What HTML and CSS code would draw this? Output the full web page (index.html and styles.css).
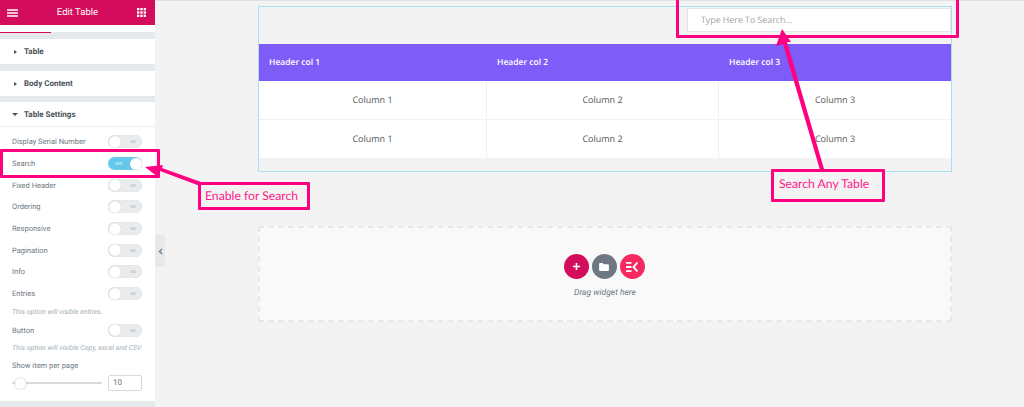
FILE: index.html
```html
<!DOCTYPE html>
<html lang="en">
<head>
  <meta charset="UTF-8" />
  <title>Edit Table</title>
  <link rel="stylesheet" href="styles.css">
</head>
<body>
  <div class="page">
    <aside class="panel">
      <header class="panel-head">
        <svg class="head-icon" width="11" height="8" viewBox="0 0 11 8"><path d="M0 1h11M0 4h11M0 7h11" stroke="#fff" stroke-width="1.4"/></svg>
        <div class="panel-title">Edit Table</div>
        <svg class="head-icon" width="9" height="9" viewBox="0 0 10 10" fill="#fff">
          <rect width="2.6" height="2.6"/><rect x="3.7" width="2.6" height="2.6"/><rect x="7.4" width="2.6" height="2.6"/>
          <rect y="3.7" width="2.6" height="2.6"/><rect x="3.7" y="3.7" width="2.6" height="2.6"/><rect x="7.4" y="3.7" width="2.6" height="2.6"/>
          <rect y="7.4" width="2.6" height="2.6"/><rect x="3.7" y="7.4" width="2.6" height="2.6"/><rect x="7.4" y="7.4" width="2.6" height="2.6"/>
        </svg>
      </header>
      <div class="tabs"><span class="tab-line"></span></div>

      <div class="section"><span class="caret"></span>Table</div>
      <div class="section"><span class="caret"></span>Body Content</div>
      <div class="section open"><span class="caret down"></span>Table Settings</div>

      <div class="settings">
        <div class="row"><span>Display Serial Number</span><span class="toggle">NO</span></div>
        <div class="row"><span>Search</span><span class="toggle on">YES</span></div>
        <div class="row"><span>Fixed Header</span><span class="toggle">NO</span></div>
        <div class="row"><span>Ordering</span><span class="toggle">NO</span></div>
        <div class="row"><span>Responsive</span><span class="toggle">NO</span></div>
        <div class="row"><span>Pagination</span><span class="toggle">NO</span></div>
        <div class="row"><span>Info</span><span class="toggle">NO</span></div>
        <div class="row"><span>Entries</span><span class="toggle">NO</span></div>
        <p class="hint">This option will visible entries.</p>
        <div class="row"><span>Button</span><span class="toggle">NO</span></div>
        <p class="hint">This option will visible Copy, excel and CSV</p>
        <div class="per-page">Show item per page</div>
        <div class="slider-row">
          <div class="slider"><span class="knob"></span></div>
          <div class="num">10</div>
        </div>
      </div>
    </aside>

    <div class="collapse">
      <svg width="5" height="7" viewBox="0 0 5 7"><path d="M4 1 1.5 3.5 4 6" fill="none" stroke="#6d7882" stroke-width="1.3"/></svg>
    </div>

    <main class="canvas">
      <section class="widget">
        <div class="search-wrap">
          <div class="search">Type Here To Search...</div>
        </div>
        <div class="tbl">
          <div class="tbl-row tbl-head"><div>Header col 1</div><div>Header col 2</div><div>Header col 3</div></div>
          <div class="tbl-row"><div>Column 1</div><div>Column 2</div><div>Column 3</div></div>
          <div class="tbl-row"><div>Column 1</div><div>Column 2</div><div>Column 3</div></div>
        </div>
      </section>

      <section class="dropzone">
        <div class="drop-btns">
          <span class="round plus">
            <svg width="9" height="9" viewBox="0 0 10 10"><path d="M5 1v8M1 5h8" stroke="#fff" stroke-width="1.8"/></svg>
          </span>
          <span class="round folder">
            <svg width="10" height="8" viewBox="0 0 11 9"><path d="M0 1a1 1 0 0 1 1-1h3l1 1.300h5a1 1 0 0 1 1 1V8a1 1 0 0 1-1 1H1a1 1 0 0 1-1-1z" fill="#fff"/></svg>
          </span>
          <span class="round ek">
            <svg width="12" height="10" viewBox="0 0 12 10"><path d="M0 0h5.500v1.800H0zM0 4.100h5.500v1.800H0zM0 8.200h5.500V10H0z" fill="#fff"/><path d="M11.500.5 7.500 5l4 4.500" fill="none" stroke="#fff" stroke-width="1.900"/></svg>
          </span>
        </div>
        <div class="drop-text">Drag widget here</div>
      </section>
    </main>

    <!-- pink annotations drawn over the screenshot -->
    <svg class="arrows" width="1024" height="407" viewBox="0 0 1024 407">
      <path d="M145 167 163 165 162 168 201 182 200 186 160 171 158 177z" fill="#ff0080"/>
      <path d="M782 29 791 42 787 42 824 169 820 170 783 44 776 46z" fill="#ff0080"/>
    </svg>
    <div class="mark mark-search"></div>
    <div class="mark mark-toggle"></div>
    <div class="mark mark-enable">Enable for Search</div>
    <div class="mark mark-any">Search Any Table</div>
  </div>
</body>
</html>
```

FILE: styles.css
```css
* {
  margin: 0;
  padding: 0;
  box-sizing: border-box;
}

body {
  background: #f3f3f3;
  font-family: 'Roboto', sans-serif;
  text-rendering: geometricPrecision;
  overflow: hidden;
}

.page {
  position: relative;
  display: flex;
  width: 1024px;
  height: 407px;
  overflow: hidden;
}

/* side panel */
.panel {
  width: 155px;
  height: 407px;
  flex-shrink: 0;
  background: #e6e9ec;
}

.panel-head {
  height: 25px;
  padding: 0 9px 0 7px;
  display: flex;
  align-items: center;
  justify-content: space-between;
  background: #d30c5c;
  color: #fff;
}

.panel-title {
  font-size: 9.500px;
}

.head-icon {
  display: block;
}

.tabs {
  height: 8px;
  background: #fff;
  border-bottom: 1px solid #e6e9ec;
}

.tab-line {
  display: block;
  width: 51px;
  height: 8px;
  border-bottom: 1.500px solid #d30c5c;
}

.section {
  height: 25px;
  margin-top: 6px;
  padding-left: 14px;
  display: flex;
  align-items: center;
  background: #fff;
  color: #495157;
  font-size: 8px;
  font-weight: 700;
}

.section:nth-child(4) {
  margin-top: 7px;
}

.section.open {
  border-bottom: 1px solid #eceeef;
}

.caret {
  width: 0;
  height: 0;
  margin-right: 7px;
  border-left: 3px solid #495157;
  border-top: 2.500px solid transparent;
  border-bottom: 2.500px solid transparent;
}

.caret.down {
  margin-left: -2px;
  margin-right: 6px;
  border-top: 3px solid #495157;
  border-left: 3px solid transparent;
  border-right: 3px solid transparent;
  border-bottom: 0;
}

.settings {
  height: 274px;
  padding: 4px 13px 0 12px;
  background: #fff;
  color: #6d7882;
  font-size: 7.500px;
}

.row {
  height: 21.700px;
  display: flex;
  align-items: center;
  justify-content: space-between;
}

.toggle {
  position: relative;
  width: 34px;
  height: 13px;
  padding-right: 6px;
  border-radius: 7px;
  background: #e9ebed;
  box-shadow: inset 0 0 1px #c4cad0;
  color: #a4afb7;
  font-size: 4px;
  line-height: 13px;
  text-align: right;
}

.toggle::after {
  content: '';
  position: absolute;
  top: 0.500px;
  left: 0.500px;
  width: 12px;
  height: 12px;
  border-radius: 50%;
  background: #fff;
  box-shadow: 0 0 1px #a4afb7;
}

.toggle.on {
  padding: 0 0 0 7px;
  background: #62c9ec;
  color: #fff;
  text-align: left;
}

.toggle.on::after {
  left: 21.500px;
}

.hint {
  height: 15px;
  color: #a4afb7;
  font-size: 7px;
  font-style: italic;
  line-height: 14px;
  white-space: nowrap;
}

.per-page {
  margin-top: 3px;
  height: 16px;
  line-height: 14px;
}

.slider-row {
  display: flex;
  align-items: center;
  justify-content: space-between;
}

.slider {
  position: relative;
  width: 90px;
  height: 2px;
  background: #d5dadf;
  border-radius: 1px;
}

.knob {
  position: absolute;
  top: -4.500px;
  left: 3px;
  width: 11px;
  height: 11px;
  border-radius: 50%;
  background: #fff;
  box-shadow: 0 0 2px #a4afb7;
}

.num {
  width: 34px;
  height: 16px;
  padding-left: 4px;
  border: 1px solid #d5dadf;
  border-radius: 2px;
  color: #6d7882;
  font-size: 8px;
  line-height: 14px;
}

.collapse {
  position: absolute;
  top: 235px;
  left: 155px;
  width: 10px;
  height: 32px;
  display: flex;
  align-items: center;
  justify-content: center;
  background: #e6e9ec;
  border-radius: 0 3px 3px 0;
}

/* canvas */
.canvas {
  flex: 1;
  padding: 6px 72px 0 103px;
  border-top: 1px solid #dfe1e5;
  font-family: 'Open Sans', sans-serif;
}

.widget {
  height: 166px;
  margin-top: -1px;
  border: 1px solid #a9e0ef;
}

.search-wrap {
  height: 37px;
  display: flex;
  justify-content: flex-end;
  padding-top: 1px;
}

.search {
  width: 264px;
  height: 24px;
  padding-left: 13px;
  background: #fff;
  border: 1px solid #e3e6e8;
  color: #a3a3a3;
  font-size: 8.800px;
  line-height: 22px;
}

.tbl-row {
  display: grid;
  grid-template-columns: 227px 232px 1fr;
  height: 39px;
  background: #fff;
  border-bottom: 1px solid #f1f1f1;
  color: #555;
  font-size: 9px;
  text-align: center;
}

.tbl-row:last-child {
  height: 38px;
  border-bottom: 0;
}

.tbl-row > div {
  line-height: 38px;
}

.tbl-row > div + div {
  border-left: 1px solid #f1f1f1;
}

.tbl-row.tbl-head {
  height: 37px;
  background: #7d5cf8;
  border-bottom: 0;
  color: #fff;
  font-size: 8.500px;
  font-weight: 600;
  text-align: left;
}

.tbl-head > div {
  padding-left: 10px;
  line-height: 37px;
}

.tbl-head > div + div {
  padding-left: 11px;
  border-left: 0;
}

.dropzone {
  height: 96px;
  margin-top: 54px;
  padding-top: 26px;
  border: 2px dashed #e8e8e8;
  background: #f9f9f9;
  font-family: 'Roboto', sans-serif;
}

.drop-btns {
  display: flex;
  justify-content: center;
  gap: 3px;
  margin-left: -2px;
}

.round {
  width: 25px;
  height: 25px;
  display: flex;
  align-items: center;
  justify-content: center;
  border-radius: 50%;
}

.plus {
  background: #d30c5c;
}

.folder {
  background: #6d7882;
}

.ek {
  background: #f5295f;
}

.drop-text {
  margin-top: 9px;
  color: #6d7882;
  font-size: 8.500px;
  font-style: italic;
  text-align: center;
}

/* annotations */
.arrows {
  position: absolute;
  top: 0;
  left: 0;
}

.mark {
  position: absolute;
  border: 3px solid #ff0080;
  border-radius: 1px;
  color: #ff1a8c;
  font-family: 'Lato', sans-serif;
  font-size: 12.200px;
  white-space: nowrap;
}

.mark-search {
  top: -6px;
  left: 676px;
  width: 283px;
  height: 44px;
}

.mark-toggle {
  top: 149px;
  left: 0;
  width: 160px;
  height: 29px;
}

.mark-enable {
  top: 182px;
  left: 198px;
  width: 112px;
  height: 28px;
  padding-left: 4px;
  line-height: 22px;
}

.mark-any {
  top: 169px;
  left: 771px;
  width: 114px;
  height: 33px;
  padding-left: 5px;
  line-height: 24px;
}
```
